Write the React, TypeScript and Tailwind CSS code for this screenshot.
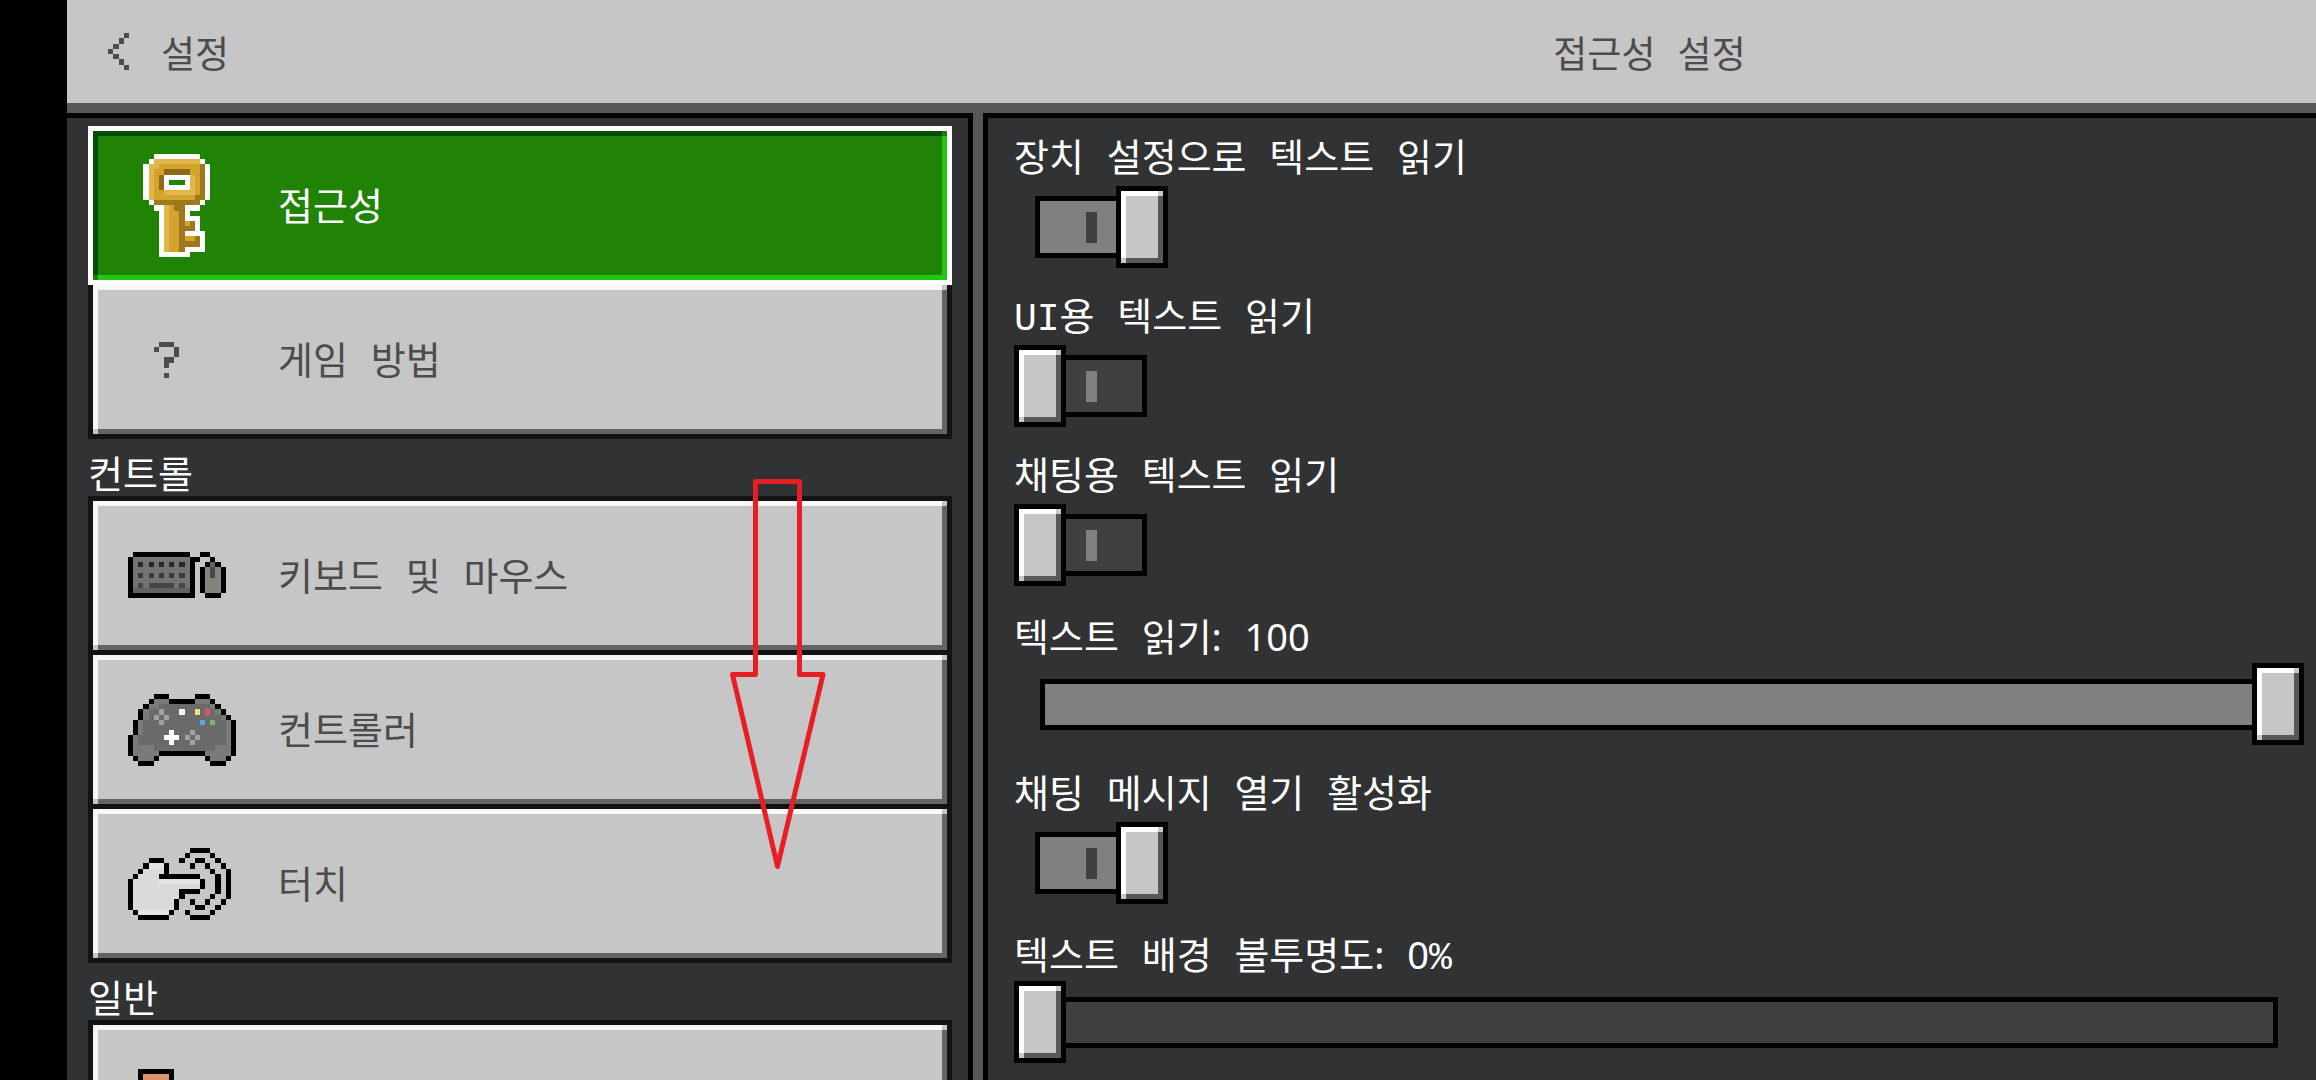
import { useId, useState } from 'react';
import type { ReactNode } from 'react';
import clsx from 'clsx';

// One letter per pixel colour, anything else is left empty
const palette: Record<string, string> = {
  K: '#000000',
  W: '#ffffff',
  Q: '#4c4c4c',
  a: '#e3b64c',
  g: '#d2a42b',
  b: '#9d781f',
  d: '#8d6a17',
  f: '#737274',
  h: '#626163',
  k: '#262626',
  l: '#3a3a3a',
  n: '#474747',
  m: '#84837d',
  c: '#6a6a6a',
  e: '#7a7a7a',
  o: '#a2a2a2',
  y: '#f0e080',
  r: '#e05070',
  u: '#58a8d8',
  v: '#88b070',
  t: '#dadada',
  s: '#e4e4e4',
  p: '#d9946c',
};

const keyIcon = [
  '.....WWWWWWWWW',
  '....WaaaaaaaaaW',
  '...WaaggggggggbW',
  '...WaggdddddggbW',
  '...WagdWWWWWagbW',
  '...WagdW...WagbW',
  '...WagdWWWWWagbW',
  '...WaggaaaaaagbW',
  '...WaggggggggbbW',
  '....WbbbbbbbbbW',
  '.....WWagbbWWW',
  '......WaggbW',
  '......WaggbWWW',
  '......WaggbgbW',
  '......WaggbbbW',
  '......WaggbWWWW',
  '......WaggbggbW',
  '......WaggbbbbW',
  '......WaggbWWWW',
  '......WWWWWW',
];

const questionIcon = [
  '......QQQ',
  '.....Q...Q',
  '.........Q',
  '.......QQ',
  '.......Q',
  '',
  '.......Q',
];

const keyboardIcon = [
  '.KKKKKKKKKKK..KK',
  'KfffffffffffKK..K',
  'KfkfkfkfkfkfK..KhK',
  'KfffffffffffK.KmnmK',
  'KflflflflflfK.KmnmK',
  'KfffffffffffK.KmmmK',
  'KfnfnnnnnfnfK.KmmmK',
  'KhhhhhhhhhhhK.KmmmK',
  'KKKKKKKKKKKKK..KKK',
];

const controllerIcon = [
  '.....KKK.....KKK',
  '....KeeeKKKKKeeeK',
  '...KeecccccccccceK',
  '..KeccocccWccycrceK',
  '..KecococccccccccceK',
  '.KecccocccccccucvcceK',
  '.KecccccccccccccccceK',
  '.KecccccWcccocccccceK',
  'KecccccWWWcococcccceK',
  'KeccccccWcccocccccceK',
  'KeeeecccccccccccceeeK',
  'KeeeeeKKKKKKKKKeeeeeK',
  '.KeeeK.........KeeeK',
  '..KKK...........KKK',
];

const touchIcon = [
  '............KKKK',
  '...........K....K',
  '....KKK...K..KK..K',
  '...KsssK....K..K..K',
  '..KttttK........K..K',
  '.KttttKKKKKKKK...K.K',
  'KtttttssssssssK..K.K',
  'KtttttttttttttK..K.K',
  'KtttttttttKKKK...K.K',
  'KtttttttttK.....K..K',
  'KttttttttK..K..K..K',
  'KttttttttK...KK..K',
  '.KssssssK..K....K',
  '..KKKKKK....KKKK',
];

const profileIcon = [
  '..KKKKKKK',
  '..KpppppK',
  '..KpppppK',
  '..KpppppK',
  '..KpppppK',
  '..KKKKKKK',
  '.KpppppppK',
  '.KpppppppK',
  '.KpppppppK',
  '.KpppppppK',
  '.KpppppppK',
  '.KKKKKKKKK',
];

const chevronIcon = ['...Q', '..Q', '.Q', 'Q', '.Q', '..Q', '...Q'];

interface PixelIconProps {
  rows: string[];
  columns?: number;
  className?: string;
}

function PixelIcon({ rows, columns = 21, className = 'w-[108px]' }: PixelIconProps) {
  return (
    <svg
      viewBox={`0 0 ${columns} ${rows.length}`}
      className={clsx('shrink-0', className)}
      shapeRendering="crispEdges"
      aria-hidden="true"
    >
      {rows.map((row, y) =>
        row.split('').map((cell, x) =>
          palette[cell] ? (
            <rect key={`${x}-${y}`} x={x} y={y} width="1" height="1" fill={palette[cell]} />
          ) : null
        )
      )}
    </svg>
  );
}

const tones = {
  grey: {
    light: 'bg-[#f7f7f7]',
    dark: 'bg-[#636463]',
    corner: 'bg-[#c6c6c6]',
    face: 'bg-[#c6c6c6]',
  },
  green: {
    light: 'bg-[#044d03]',
    dark: 'bg-[#20c80f]',
    corner: 'bg-[#1e7a0c]',
    face: 'bg-[#218306]',
  },
  knob: {
    light: 'bg-white',
    dark: 'bg-[#58575a]',
    corner: 'bg-[#c9c9c9]',
    face: 'bg-[#c6c6c6]',
  },
};

interface BevelProps {
  tone: keyof typeof tones;
  className?: string;
  children?: ReactNode;
}

// Raised face with 5px edges and a square in the two corners where they meet
function Bevel({ tone, className, children }: BevelProps) {
  const { light, dark, corner, face } = tones[tone];
  return (
    <span className="grid h-full w-full grid-cols-[5px_1fr_5px] grid-rows-[5px_1fr_5px]">
      <span className={clsx('col-span-2', light)} />
      <span className={corner} />
      <span className={light} />
      <span className={clsx(face, className)}>{children}</span>
      <span className={dark} />
      <span className={corner} />
      <span className={clsx('col-span-2', dark)} />
    </span>
  );
}

interface MenuItemProps {
  icon: string[];
  label?: string;
  name?: string;
  selected?: boolean;
  onClick: () => void;
}

function MenuItem({ icon, label, name, selected = false, onClick }: MenuItemProps) {
  return (
    <button
      type="button"
      aria-label={name}
      aria-current={selected}
      onClick={onClick}
      className={clsx(
        'block h-[159px] w-full border-[5px] text-left',
        selected ? 'relative border-white text-white' : 'border-[#131313] text-[#4c4c4c]'
      )}
    >
      <Bevel tone={selected ? 'green' : 'grey'} className="flex items-center gap-[42px] pl-[30px]">
        <PixelIcon rows={icon} />
        {label && <span className="pt-2">{label}</span>}
      </Bevel>
    </button>
  );
}

function MenuGroup({ children }: { children: ReactNode }) {
  return <div className="flex flex-col -space-y-[5px]">{children}</div>;
}

function MenuHeading({ children }: { children: ReactNode }) {
  return <h2 className="h-[57px] pt-[18px] text-white">{children}</h2>;
}

function Knob({ left }: { left: string }) {
  return (
    <span
      className="pointer-events-none absolute top-0 h-[82px] w-[52px] border-[5px] border-black"
      style={{ left }}
    >
      <Bevel tone="knob" />
    </span>
  );
}

function ToggleSetting({ label, defaultChecked = false }: { label: string; defaultChecked?: boolean }) {
  const id = useId();
  const [checked, setChecked] = useState(defaultChecked);

  return (
    <div className="h-[159px]">
      <label htmlFor={id} className="block h-[46px]">
        {label}
      </label>
      <div className="relative flex h-[82px] w-[154px] items-center px-[21px]">
        <span
          className={clsx(
            'flex h-[62px] flex-1 items-center justify-center border-[5px] border-black',
            checked ? 'bg-[#808080]' : 'bg-[#404040]'
          )}
        >
          <span className={clsx('h-[31px] w-[11px]', checked ? 'bg-[#404040]' : 'bg-[#808080]')} />
        </span>
        <Knob left={checked ? '102px' : '0px'} />
        <input
          id={id}
          type="checkbox"
          role="switch"
          checked={checked}
          onChange={(e) => setChecked(e.target.checked)}
          className="absolute inset-0 h-full w-full cursor-pointer opacity-0"
        />
      </div>
    </div>
  );
}

interface SliderSettingProps {
  label: string;
  unit?: string;
  defaultValue: number;
}

function SliderSetting({ label, unit = '', defaultValue }: SliderSettingProps) {
  const id = useId();
  const [value, setValue] = useState(defaultValue);

  return (
    <div className="h-[159px]">
      <label htmlFor={id} className="block h-[46px]">
        {label}
        <span className="font-['Noto_Sans'] leading-none">:</span>{' '}
        <span className="font-['Noto_Sans'] leading-none">{value}</span>
        {unit}
      </label>
      <div className="relative flex h-[82px] items-center px-[26px]">
        <span className="h-[51px] flex-1 border-[5px] border-black bg-[#404040]">
          <span className="block h-full bg-[#808080]" style={{ width: `${value}%` }} />
        </span>
        <Knob left={`calc((100% - 52px) * ${value / 100})`} />
        <input
          id={id}
          type="range"
          min={0}
          max={100}
          value={value}
          onChange={(e) => setValue(Number(e.target.value))}
          className="absolute inset-0 h-full w-full cursor-pointer opacity-0"
        />
      </div>
    </div>
  );
}

export default function App() {
  const [selected, setSelected] = useState('accessibility');

  const item = (id: string) => ({
    selected: selected === id,
    onClick: () => setSelected(id),
  });

  return (
    <div className="relative flex h-screen flex-col overflow-hidden border-l-[67px] border-black bg-[#58575a] font-['Liberation_Mono','Noto_Sans_CJK_KR',monospace] text-[38px] leading-[42px]">
      <header className="grid h-[103px] shrink-0 grid-cols-[906fr_10px_1333fr] items-center bg-[#c6c6c6] text-[37px] text-[#4c4c4c]">
        <button type="button" className="flex items-center gap-8 pl-[41px] text-left">
          <PixelIcon rows={chevronIcon} columns={4} className="w-[21px]" />
          <span className="pt-3">설정</span>
        </button>
        <h1 className="col-start-3 pt-3 text-center">접근성 설정</h1>
      </header>

      <main className="mt-[10px] grid min-h-0 flex-1 grid-cols-[906fr_10px_1333fr]">
        <nav className="overflow-y-auto border-t-[5px] border-r-[5px] border-black bg-[#313233] pt-2 pr-4 pl-[21px] [scrollbar-width:none]">
          <MenuGroup>
            <MenuItem icon={keyIcon} label="접근성" {...item('accessibility')} />
            <MenuItem icon={questionIcon} label="게임 방법" {...item('how-to-play')} />
          </MenuGroup>

          <MenuHeading>컨트롤</MenuHeading>
          <MenuGroup>
            <MenuItem icon={keyboardIcon} label="키보드 및 마우스" {...item('keyboard')} />
            <MenuItem icon={controllerIcon} label="컨트롤러" {...item('controller')} />
            <MenuItem icon={touchIcon} label="터치" {...item('touch')} />
          </MenuGroup>

          <MenuHeading>일반</MenuHeading>
          <MenuGroup>
            <MenuItem icon={profileIcon} name="일반" {...item('general')} />
          </MenuGroup>
        </nav>

        <section className="col-start-3 overflow-y-auto border-t-[5px] border-l-[5px] border-black bg-[#313233] pt-[22px] pr-3 pl-[26px] text-white [scrollbar-width:none]">
          <ToggleSetting label="장치 설정으로 텍스트 읽기" defaultChecked />
          <ToggleSetting label="UI용 텍스트 읽기" />
          <ToggleSetting label="채팅용 텍스트 읽기" />
          <SliderSetting label="텍스트 읽기" defaultValue={100} />
          <ToggleSetting label="채팅 메시지 열기 활성화" defaultChecked />
          <SliderSetting label="텍스트 배경 불투명도" unit="%" defaultValue={0} />
        </section>
      </main>

      {/* Scroll hint drawn over the menu */}
      <svg
        viewBox="0 0 100 396"
        className="pointer-events-none absolute top-[476px] left-[661px] h-[396px] w-[100px]"
        fill="none"
        stroke="#e81e25"
        strokeWidth="5"
        strokeLinejoin="round"
        aria-hidden="true"
      >
        <path d="M27.5 5.5H71.5V198.5H95L49.5 390.5L4.5 198.5H27.5Z" />
      </svg>
    </div>
  );
}
